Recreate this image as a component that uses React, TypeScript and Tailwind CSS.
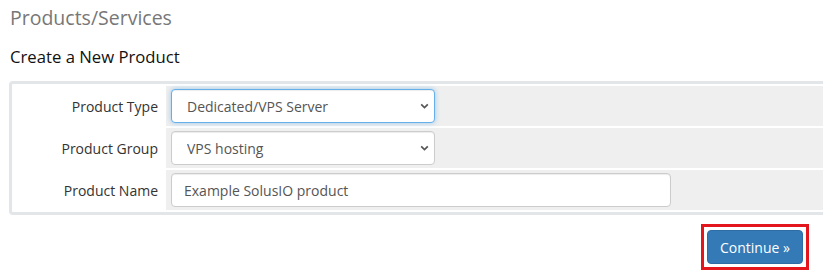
import React from "react";

const Chevron = () => (
  <svg width="9" height="6" viewBox="0 0 9 6" className="pointer-events-none absolute right-[6px] top-1/2 -translate-y-1/2">
    <path d="M1.2 1.3 L4.5 4.5 L7.8 1.3" fill="none" stroke="#555" strokeWidth="1.7" />
  </svg>
);

function SelectBox({ value, focused }: { value: string; focused?: boolean }) {
  return (
    <div className="relative w-[264px]">
      <select
        defaultValue={value}
        className={
          "block h-[34px] w-full appearance-none rounded-[4px] border bg-white pl-[15px] pr-6 text-[14px] text-[#555] outline-none " +
          (focused
            ? "border-[#66afe9] shadow-[inset_0_1px_1px_rgba(0,0,0,0.075),0_0_5px_rgba(102,175,233,0.6)]"
            : "border-[#ccc] shadow-[inset_0_1px_1px_rgba(0,0,0,0.075)]")
        }
      >
        <option>{value}</option>
      </select>
      <Chevron />
    </div>
  );
}

export default function App() {
  return (
    <div className="h-[274px] w-[823px] overflow-hidden bg-white font-['Open_Sans',sans-serif]">
      <div className="pl-[10px]">
        <h1 className="mt-[6px] h-[24px] text-[19.5px] font-normal leading-[24px] text-[#777]">Products/Services</h1>
        <h2 className="mt-[15px] h-[24px] text-[16.7px] font-normal leading-[24px] text-[#111]">Create a New Product</h2>
      </div>
      <div className="ml-[9px] mt-[12px] w-[830px]">
        <table className="w-full border-separate border-spacing-[2px] rounded-[4px] border-[3px] border-[#e2e6e9] text-[14px]">
          <tbody>
            <tr>
              <td className="h-[40px] w-[150px] bg-white pr-[6px] text-right text-[#333]">Product Type</td>
              <td className="h-[40px] bg-[#efefef] py-[3px] pl-[5px]">
                <SelectBox value="Dedicated/VPS Server" focused />
              </td>
            </tr>
            <tr>
              <td className="h-[40px] w-[150px] bg-white pr-[6px] text-right text-[#333]">Product Group</td>
              <td className="h-[40px] bg-[#efefef] py-[3px] pl-[5px]">
                <SelectBox value="VPS hosting" />
              </td>
            </tr>
            <tr>
              <td className="h-[40px] w-[150px] bg-white pr-[6px] text-right text-[#333]">Product Name</td>
              <td className="h-[40px] bg-[#efefef] py-[3px] pl-[5px]">
                <input
                  defaultValue="Example SolusIO product"
                  className="block h-[34px] w-[500px] rounded-[4px] border border-[#ccc] bg-white px-[12px] text-[14px] text-[#555] shadow-[inset_0_1px_1px_rgba(0,0,0,0.075)] outline-none"
                />
              </td>
            </tr>
          </tbody>
        </table>
      </div>
      <div className="mt-[9px] flex justify-end pr-[14px]">
        <div className="border-[3px] border-[#e3161d] p-[3px]">
          <button className="h-[34px] w-[96px] rounded-[4px] border border-[#2e6da4] bg-[#337ab7] text-[14px] text-white">
            Continue »
          </button>
        </div>
      </div>
    </div>
  );
}
